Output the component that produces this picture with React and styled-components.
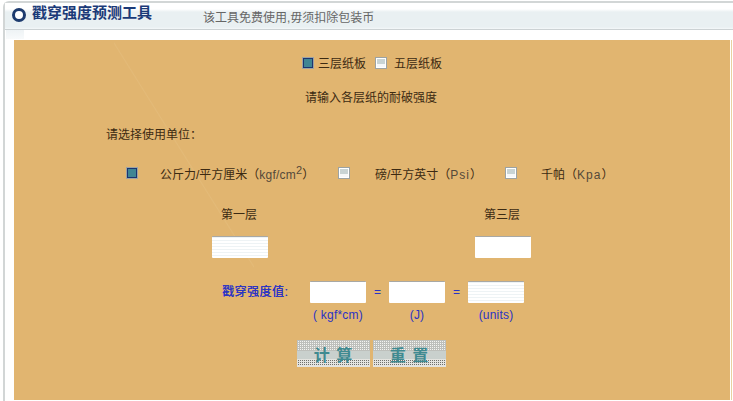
import React from 'react';
import styled, { createGlobalStyle } from 'styled-components';

const cjk = `"Liberation Sans", "Noto Sans CJK SC", sans-serif`;

// one row of single-pixel dots for the dithered button face
const dots = (color, rows) =>
  rows.map(y => `conic-gradient(${color} 0 25%, transparent 0) 0 ${y}px / 2px 2px repeat-x`).join(', ');

const GlobalStyle = createGlobalStyle`
  html, body {
    margin: 0;
    padding: 0;
    height: 401px;
    overflow: hidden;
    background: #fff;
    font-family: ${cjk};
    font-size: 12px;
    color: #3c2a12;
  }
`;

const Page = styled.div`
  padding: 1px 0 0 3px;
`;

const Shell = styled.div`
  border-top: 2px solid #d2d6d6;
  border-left: 2px solid #d2d6d6;
  border-top-left-radius: 6px;
  height: 398px;
  background: linear-gradient(#eef3f5, #f8fafb) 1px 27px / 18px 9px no-repeat;
`;

const Header = styled.header`
  height: 26px;
  border-bottom: 1px solid #ccd2d4;
  display: flex;
  align-items: flex-start;
  background: linear-gradient(#fff 0, #fff 6px, #e9f0f2 9px, #e9f0f2 24px, #f4f8f9 26px);
`;

const Ring = styled.span`
  width: 14px;
  height: 14px;
  box-sizing: border-box;
  border: 3px solid #1d3b6e;
  border-radius: 50%;
  background: #fff;
  margin: 5px 0 0 7px;
`;

const Title = styled.h1`
  margin: 0 0 0 6px;
  font-size: 15px;
  line-height: 20px;
  font-weight: 700;
  color: #1b3a78;
  width: 171px;
`;

const Notice = styled.span`
  color: #666;
  line-height: 18px;
  margin-top: 6px;
`;

const Panel = styled.main`
  width: 716px;
  height: 360px;
  margin: 10px 0 0 9px;
  background:
    linear-gradient(58deg, transparent calc(50% - 1px), #e3ba78 50%, transparent calc(50% + 1px)) 100px 0 / 140px 230px no-repeat,
    #e1b570;
  box-shadow: 1px 0 0 #fff, 2px 0 0 #e8d0a0;
  overflow: hidden;
`;

const CenterRow = styled.div`
  display: flex;
  justify-content: center;
  align-items: center;
  height: 18px;
  margin-top: ${p => p.$top}px;
  padding-right: ${p => p.$nudge || 0}px;
`;

const Box = styled.span`
  box-sizing: border-box;
  width: 12px;
  height: 12px;
  flex: none;
  border: 1px solid #9ca3a3;
  background: ${p => p.$on
    ? 'linear-gradient(#3f8594, #3f8594) center / 8px 8px no-repeat, #1d3470'
    : 'linear-gradient(#c9d4d4 0 55%, #f6f8f8 55%)'};
  box-shadow: ${p => p.$on ? 'none' : 'inset 0 0 0 1px #fff'};
`;

const LayerChoice = styled.label`
  display: flex;
  align-items: center;
  gap: ${p => p.$gap}px;
  margin-left: ${p => p.$left || 0}px;
  margin-top: -1px;
`;

const Prompt = styled.div`
  margin: 21px 0 0 92px;
  line-height: 18px;
`;

const UnitRow = styled.div`
  display: grid;
  grid-template-columns: 12px 200px 12px 155px 12px auto;
  align-items: center;
  margin: 19px 0 0 112px;
  height: 18px;
`;

const UnitLabel = styled.span`
  margin-left: ${p => p.$left}px;
  margin-top: 2px;
  white-space: nowrap;
  sup {
    font-size: 11px;
    line-height: 0;
  }
`;

const Latin = styled.span`
  color: #54493a;
  letter-spacing: ${p => p.$spaced ? '1px' : '0.2px'};
`;

const LayerRow = styled.div`
  display: flex;
  margin: 27px 0 0 198px;
  gap: 207px;
`;

const LayerField = styled.div`
  width: 56px;
  display: flex;
  flex-direction: column;
  align-items: center;
  gap: 14px;
  line-height: 14px;
  white-space: nowrap;
`;

const LayerName = styled.span`
  margin-right: 2px;
`;

const Field = styled.input`
  box-sizing: border-box;
  display: block;
  width: 56px;
  height: 22px;
  padding: 0;
  border: none;
  border-top: 1px solid #a8a8a4;
  border-radius: 1px;
  background: ${p => p.$lined
    ? 'repeating-linear-gradient(#eef3f5 0 1px, #fff 1px 3px)'
    : '#fff'};
  outline: none;
`;

const ValueGrid = styled.div`
  display: grid;
  grid-template-columns: 88px 56px 23px 56px 23px 56px;
  justify-items: center;
  align-items: center;
  margin: 23px 0 0 208px;
`;

const ValueLabel = styled.strong`
  justify-self: start;
  margin-bottom: 3px;
  color: #2a33c4;
  font-weight: 400;
  letter-spacing: 0.5px;
  text-shadow: 0.3px 0 0 #2a33c4;
`;

const Equals = styled.span`
  color: #2a33c4;
`;

const UnitNote = styled.span`
  color: #2a33c4;
  margin-top: 4px;
  line-height: 16px;
  letter-spacing: 0.2px;
  white-space: nowrap;
  grid-column: ${p => p.$col};
`;

const Buttons = styled.div`
  display: flex;
  gap: 3px;
  margin: 17px 0 0 283px;
`;

const ActionButton = styled.button`
  width: 73px;
  height: 27px;
  padding: 0;
  border: none;
  background:
    ${dots('#f4f4f2', [1, 3, 5, 7, 9])},
    ${dots('#6f6f6b', [20, 22, 24])},
    linear-gradient(#bdbfbb 0 11px, #c9d0cd 11px 19px, #e4e4e0 19px);
  color: #3f8a90;
  font-family: ${cjk};
  font-size: 16px;
  font-weight: 700;
  letter-spacing: 1px;
  white-space: pre;
`;

export default function App() {
  return (
    <Page>
      <GlobalStyle />
      <Shell>
        <Header>
          <Ring />
          <Title>戳穿强度预测工具</Title>
          <Notice>该工具免费使用,毋须扣除包装币</Notice>
        </Header>
        <Panel>
          <CenterRow $top={14}>
            <LayerChoice $gap={4}><Box $on />三层纸板</LayerChoice>
            <LayerChoice $gap={7} $left={9}><Box />五层纸板</LayerChoice>
          </CenterRow>
          <CenterRow $top={15} $nudge={2}>请输入各层纸的耐破强度</CenterRow>
          <Prompt>请选择使用单位：</Prompt>
          <UnitRow>
            <Box $on />
            <UnitLabel $left={22}>公斤力/平方厘米（<Latin>kgf/cm<sup>2</sup></Latin>）</UnitLabel>
            <Box />
            <UnitLabel $left={25}>磅/平方英寸（<Latin $spaced>Psi</Latin>）</UnitLabel>
            <Box />
            <UnitLabel $left={24}>千帕（<Latin $spaced>Kpa</Latin>）</UnitLabel>
          </UnitRow>
          <LayerRow>
            <LayerField><LayerName>第一层</LayerName><Field $lined /></LayerField>
            <LayerField><LayerName>第三层</LayerName><Field /></LayerField>
          </LayerRow>
          <ValueGrid>
            <ValueLabel>戳穿强度值:</ValueLabel>
            <Field />
            <Equals>=</Equals>
            <Field />
            <Equals>=</Equals>
            <Field $lined />
            <UnitNote $col={2}>( kgf*cm)</UnitNote>
            <UnitNote $col={4}>(J)</UnitNote>
            <UnitNote $col={6}>(units)</UnitNote>
          </ValueGrid>
          <Buttons>
            <ActionButton>计 算</ActionButton>
            <ActionButton>重 置</ActionButton>
          </Buttons>
        </Panel>
      </Shell>
    </Page>
  );
}
